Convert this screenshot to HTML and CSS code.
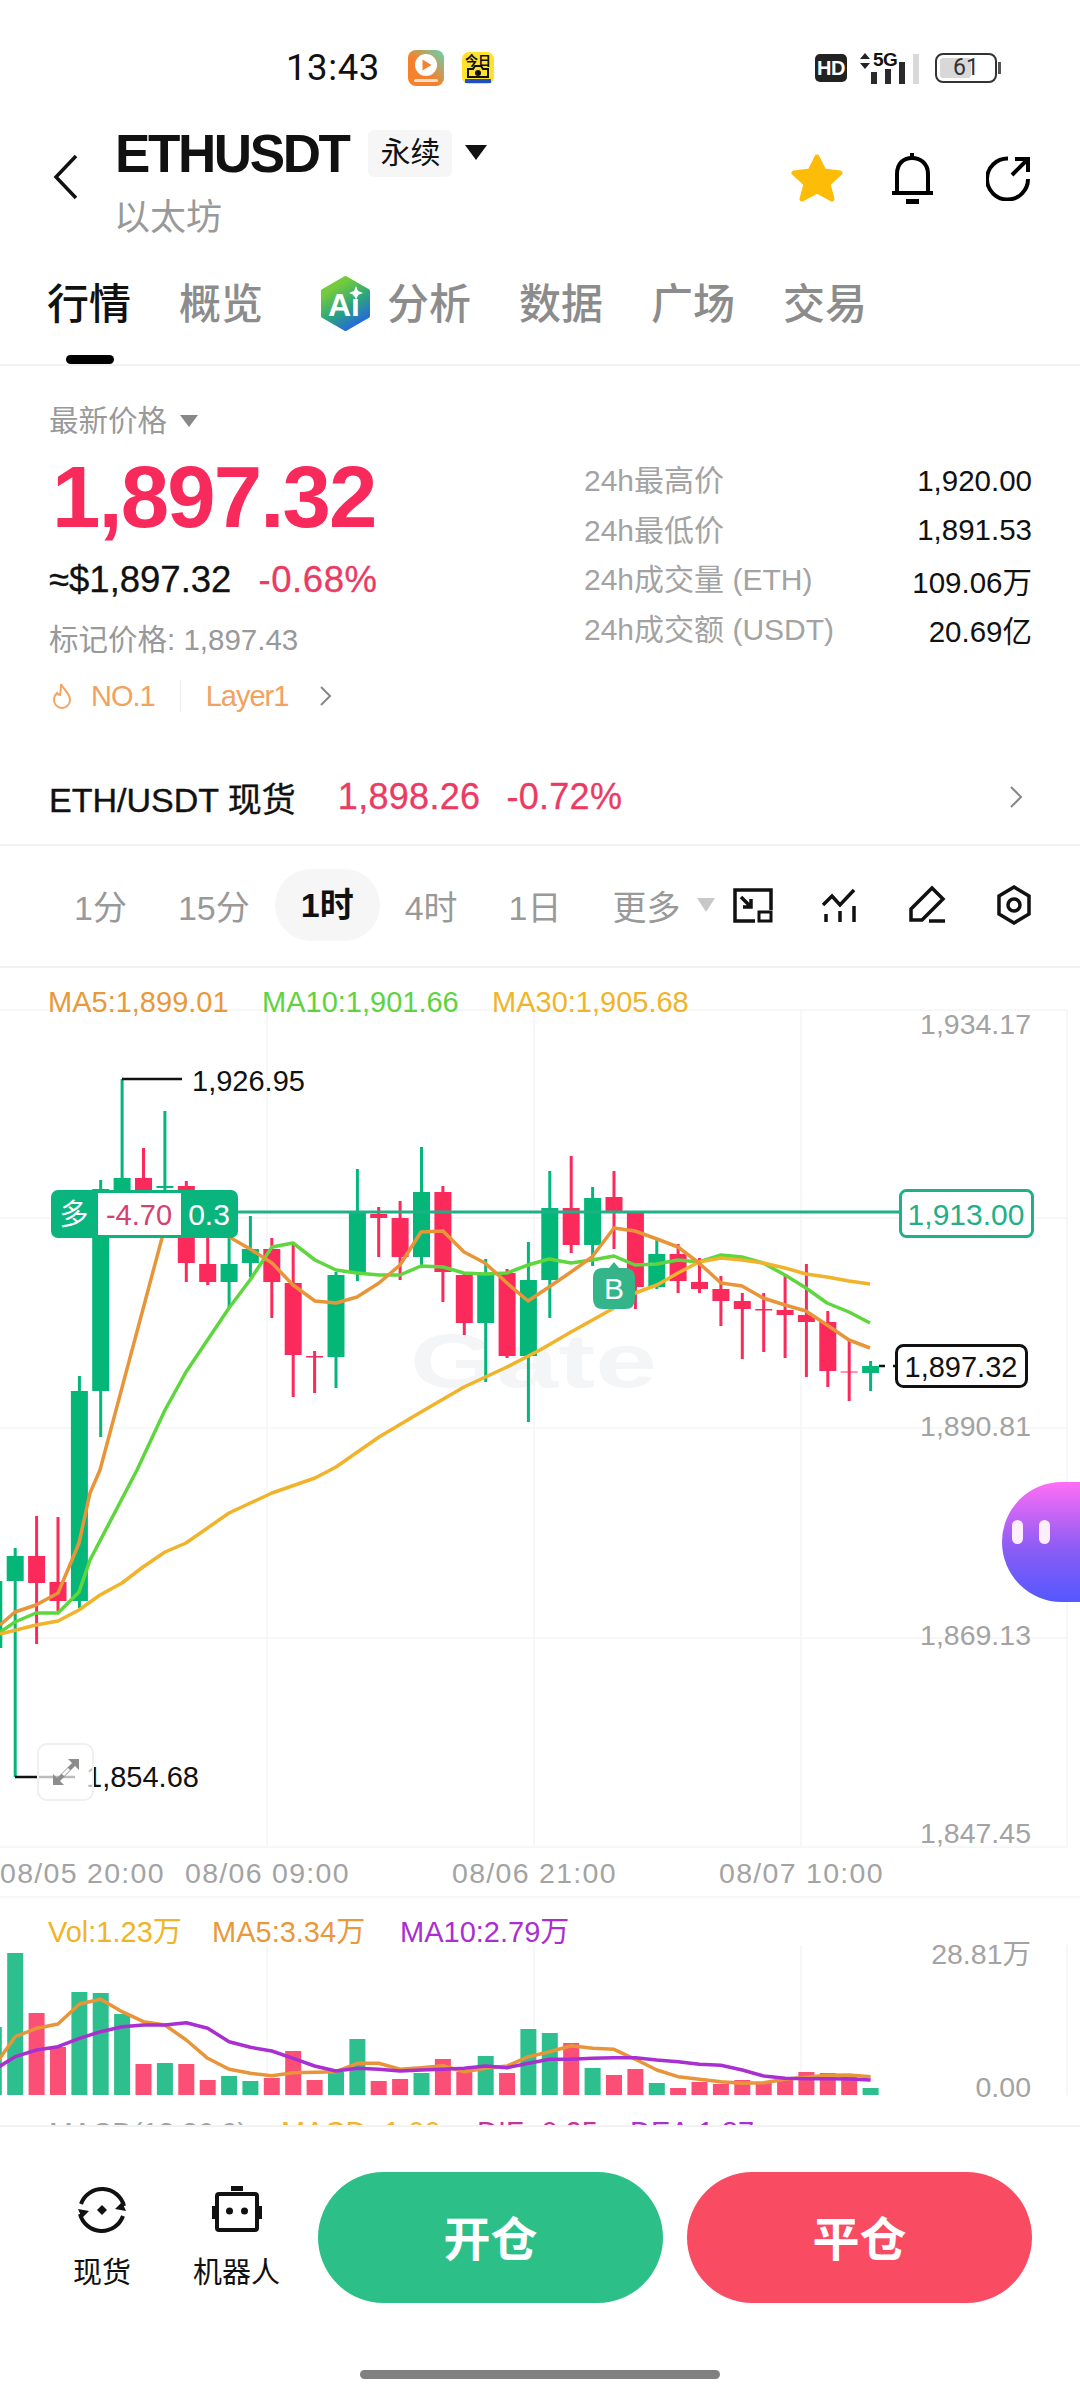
FILE: index.html
```html
<!DOCTYPE html>
<html lang="zh-CN">
<head>
  <meta charset="UTF-8">
  <meta name="viewport" content="width=device-width, initial-scale=1.0">
  <title>ETHUSDT 永续</title>
  <link rel="stylesheet" href="styles.css">
</head>
<body>
  <div class="phone">
    <div class="status">
      <span class="clock">13:43</span>
      <svg class="app-one" width="36" height="36" viewBox="0 0 36 36">
        <defs>
          <linearGradient id="appGrad" x1="0" y1="1" x2="1" y2="0">
            <stop offset="0.45" stop-color="#f5812e"/>
            <stop offset="1" stop-color="#5fd6b4"/>
          </linearGradient>
        </defs>
        <rect width="36" height="36" rx="8" fill="url(#appGrad)"/>
        <circle cx="18" cy="15" r="11" fill="#fff"/>
        <path d="M14.5 9.5 L23.5 15 L14.5 20.5Z" fill="#f5812e"/>
        <rect x="6" y="29" width="24" height="3" rx="1.5" fill="#fde0c8"/>
      </svg>
      <svg class="app-two" width="32" height="32" viewBox="0 0 32 32">
        <rect width="32" height="32" rx="7" fill="#ffe22e"/>
        <text class="app-two-text" x="16" y="13">今日</text>
        <path d="M6 25V17H11L13 14H19L21 17H26V25Z" fill="none" stroke="#111" stroke-width="2"/>
        <circle cx="16" cy="21" r="3" fill="#111"/>
        <rect x="3" y="27" width="26" height="4" fill="#1f4fc0"/>
      </svg>
      <div class="status-right">
        <span class="hd">HD</span>
        <div class="signal">
          <span class="net">5G</span>
          <svg class="net-arrows" width="12" height="16" viewBox="0 0 12 16"><path d="M6 0L11 6H1ZM6 16L11 10H1Z" fill="#222"/></svg>
          <div class="bars">
            <i class="bar b1"></i><i class="bar b2"></i><i class="bar b3"></i><i class="bar b4"></i>
          </div>
        </div>
        <div class="battery"><div class="battery-fill"></div><span class="battery-num">61</span></div>
        <i class="battery-nib"></i>
      </div>
    </div>

    <div class="header">
      <svg class="back" width="26" height="46" viewBox="0 0 26 46"><path d="M23 2L3 23L23 44" fill="none" stroke="#111" stroke-width="3.5"/></svg>
      <div class="title-block">
        <div class="title-row">
          <span class="title">ETHUSDT</span>
          <span class="tag">永续</span>
          <i class="caret"></i>
        </div>
        <div class="subtitle">以太坊</div>
      </div>
      <div class="header-icons">
        <svg width="52" height="48" viewBox="0 0 52 48"><path d="M26 3L33 17L49 19L37 30L41 45L26 37L11 45L15 30L3 19L19 17Z" fill="#fdbc07" stroke="#fdbc07" stroke-width="5" stroke-linejoin="round"/></svg>
        <svg width="44" height="52" viewBox="0 0 44 52"><path d="M6 41V22C6 12 12 6 21 6C30 6 37 12 37 22V41M1 41H42" fill="none" stroke="#000" stroke-width="4"/><path d="M21 1V6" stroke="#000" stroke-width="4"/><rect x="15" y="47" width="13" height="5" fill="#000"/></svg>
        <svg class="share" width="46" height="46" viewBox="0 0 46 46"><path d="M42 24A20.500 20.500 0 1 1 22 3.500" fill="none" stroke="#000" stroke-width="4"/><path d="M26 20L41 5M29 4H42V17" fill="none" stroke="#000" stroke-width="4"/></svg>
      </div>
    </div>

    <div class="tabs">
      <span class="tab tab-on">行情<i class="tab-line"></i></span>
      <span class="tab">概览</span>
      <svg class="ai-icon" width="51" height="55" viewBox="0 0 51 55">
        <defs>
          <linearGradient id="aiGrad" x1="0.2" y1="0.1" x2="0.7" y2="1">
            <stop offset="0.1" stop-color="#74cb3c"/>
            <stop offset="0.55" stop-color="#2ba57f"/>
            <stop offset="1" stop-color="#2563e6"/>
          </linearGradient>
        </defs>
        <path d="M25.500 2L48 15V40L25.500 53L3 40V15Z" fill="url(#aiGrad)" stroke="url(#aiGrad)" stroke-width="4" stroke-linejoin="round"/>
        <text class="ai-text" x="24" y="40">Ai</text>
        <path d="M36 10L38 15L43 17L38 19L36 24L34 19L29 17L34 15Z" fill="#fff"/>
      </svg>
      <span class="tab tab-ai">分析</span>
      <span class="tab">数据</span>
      <span class="tab">广场</span>
      <span class="tab">交易</span>
    </div>

    <div class="summary">
      <div class="price-col">
        <div class="price-label">最新价格<i class="caret caret-grey"></i></div>
        <div class="price">1,897.32</div>
        <div class="usd-row"><span>≈$1,897.32</span><span class="red">-0.68%</span></div>
        <div class="mark">标记价格: 1,897.43</div>
        <div class="rank-row">
          <svg width="20" height="26" viewBox="0 0 20 26"><path d="M9 1C11 6 18 10 18 17A8 8 0 0 1 2 17C2 14 3 12 5 10C6 12 7 12 8 12C9 8 9 5 9 1Z" fill="none" stroke="#f3a566" stroke-width="2"/></svg>
          <span class="rank">NO.1</span>
          <i class="rank-sep"></i>
          <span class="rank">Layer1</span>
          <svg width="13" height="22" viewBox="0 0 13 22"><path d="M2 2L11 11L2 20" fill="none" stroke="#888" stroke-width="2"/></svg>
        </div>
      </div>
      <div class="stats">
        <div class="stat"><span>24h最高价</span><b>1,920.00</b></div>
        <div class="stat"><span>24h最低价</span><b>1,891.53</b></div>
        <div class="stat"><span>24h成交量 (ETH)</span><b>109.06万</b></div>
        <div class="stat"><span>24h成交额 (USDT)</span><b>20.69亿</b></div>
      </div>
    </div>

    <div class="spot">
      <span class="spot-name">ETH/USDT 现货</span>
      <span class="spot-num">1,898.26</span>
      <span class="spot-num">-0.72%</span>
      <svg class="spot-go" width="14" height="24" viewBox="0 0 14 24"><path d="M2 2L12 12L2 22" fill="none" stroke="#888" stroke-width="2"/></svg>
    </div>

    <div class="periods">
      <span class="period">1分</span>
      <span class="period">15分</span>
      <span class="period period-on">1时</span>
      <span class="period">4时</span>
      <span class="period">1日</span>
      <span class="period">更多</span>
      <i class="caret caret-pale"></i>
      <div class="tools">
        <svg width="40" height="40" viewBox="0 0 40 40"><path d="M22 36H2V5H38V25" fill="none" stroke="#111" stroke-width="3.500"/><rect x="26" y="27" width="12" height="9" fill="none" stroke="#111" stroke-width="3"/><path d="M8 12L18 22M18 14V22H10" fill="none" stroke="#111" stroke-width="3.500"/></svg>
        <svg width="40" height="40" viewBox="0 0 40 40"><path d="M3 20L12 11L20 20L34 5M6 29V37M20 26V37M34 21V37" fill="none" stroke="#111" stroke-width="3.500"/></svg>
        <svg width="40" height="40" viewBox="0 0 40 40"><path d="M25 3L36 14L15 35H4V24ZM22 36H38" fill="none" stroke="#111" stroke-width="3.500"/></svg>
        <svg width="40" height="40" viewBox="0 0 40 40"><path d="M20 2L35 11V29L20 38L5 29V11Z" fill="none" stroke="#111" stroke-width="3.500"/><circle cx="20" cy="20" r="6" fill="none" stroke="#111" stroke-width="3.500"/></svg>
      </div>
    </div>

    <div class="chart">
      <svg id="plot" class="plot" width="1080" height="1157" viewBox="0 968 1080 1157"></svg>
      <div class="bot"><i class="eye"></i><i class="eye"></i></div>
      <div class="expand">
        <svg width="30" height="30" viewBox="0 0 30 30"><path d="M28 2V13L24 9L9 24L13 28H2V17L6 21L21 6L17 2Z" fill="#8c8c8c"/><path d="M12 18L18 12" stroke="#fff" stroke-width="3"/></svg>
      </div>
    </div>

    <div class="footer">
      <div class="foot-item">
        <svg width="50" height="50" viewBox="0 0 50 50"><path d="M3 29A22.500 22.500 0 0 0 46 31M47 21A22.500 22.500 0 0 0 4 19" fill="none" stroke="#111" stroke-width="4"/><path d="M1 24L12 26L5 33ZM49 26L38 24L45 17Z" fill="#111"/><path d="M25 20L30 25L25 30L20 25Z" fill="#111"/></svg>
        <span class="foot-label">现货</span>
      </div>
      <div class="foot-item">
        <svg width="50" height="50" viewBox="0 0 50 50"><rect x="19" y="1" width="12" height="5" fill="#111"/><rect x="5" y="9" width="40" height="36" rx="2" fill="none" stroke="#111" stroke-width="4"/><rect x="0" y="21" width="4" height="13" fill="#111"/><rect x="46" y="21" width="4" height="13" fill="#111"/><circle cx="17.500" cy="26" r="3.500" fill="#111"/><circle cx="32.500" cy="26" r="3.500" fill="#111"/></svg>
        <span class="foot-label">机器人</span>
      </div>
      <button class="trade trade-open">开仓</button>
      <button class="trade trade-close">平仓</button>
    </div>
    <div class="home-wrap"><i class="home-bar"></i></div>
  </div>

  <script>
    // [slot, high, bodyTop, bodyBottom, low, up]
    const candles = [
      [-1, 1581, 1581, 1648, 1648, 1], [0, 1548, 1556, 1581, 1777, 1], [1, 1516, 1556, 1583, 1644, 0],
      [2, 1517, 1582, 1601, 1611, 0], [3, 1376, 1391, 1601, 1608, 1], [4, 1180, 1189, 1391, 1437, 1],
      [5, 1079, 1178, 1195, 1195, 1], [6, 1148, 1178, 1190, 1195, 0], [7, 1111, 1186, 1188, 1200, 1],
      [8, 1181, 1186, 1263, 1282, 0], [9, 1237, 1264, 1282, 1285, 0], [10, 1237, 1264, 1282, 1308, 1],
      [11, 1216, 1249, 1263, 1277, 1], [12, 1238, 1249, 1282, 1318, 0], [13, 1245, 1283, 1355, 1397, 0],
      [14, 1351, 1356, 1357.5, 1393, 0], [15, 1272, 1275, 1357, 1388, 1], [16, 1169, 1213, 1272, 1281, 1],
      [17, 1207, 1214, 1218, 1257, 0], [18, 1201, 1218, 1257, 1280, 0], [19, 1147, 1192, 1257, 1267, 1],
      [20, 1186, 1192, 1272, 1302, 0], [21, 1272, 1275, 1323, 1335, 0], [22, 1259, 1275, 1323, 1382, 1],
      [23, 1269, 1273, 1356, 1358, 0], [24, 1242, 1280, 1356, 1422, 1], [25, 1171, 1208, 1280, 1318, 1],
      [26, 1156, 1208, 1245, 1253, 0], [27, 1187, 1198, 1245, 1266, 1], [28, 1171, 1197, 1211, 1249, 0],
      [29, 1213, 1213, 1287, 1309, 0], [30, 1240, 1254, 1287, 1289, 1], [31, 1244, 1254, 1281, 1293, 0],
      [32, 1258, 1282, 1289, 1293, 0], [33, 1276, 1289, 1301, 1326, 0], [34, 1293, 1301, 1309, 1359, 0],
      [35, 1293, 1309, 1310.5, 1352, 0], [36, 1274, 1310, 1315, 1358, 0], [37, 1264, 1315, 1322, 1377, 0],
      [38, 1311, 1322, 1371, 1387, 0], [39, 1340, 1371.5, 1372.5, 1401, 0], [40, 1361, 1366, 1373, 1391, 1]
    ];

    // [slot, top of bar, up]
    const volumes = [
      [-1, 2027, 1], [0, 1953, 1], [1, 2013, 0], [2, 2047, 0], [3, 1992, 1], [4, 1993, 1], [5, 2014, 1],
      [6, 2064, 0], [7, 2063, 1], [8, 2064, 0], [9, 2080, 0], [10, 2076, 1], [11, 2081, 1], [12, 2078, 0],
      [13, 2051, 0], [14, 2080, 0], [15, 2072, 1], [16, 2039, 1], [17, 2081, 0], [18, 2079, 0], [19, 2073, 1],
      [20, 2059, 0], [21, 2072, 0], [22, 2056, 1], [23, 2073, 0], [24, 2029, 1], [25, 2033, 1], [26, 2043, 0],
      [27, 2068, 1], [28, 2075, 0], [29, 2069, 0], [30, 2083, 1], [31, 2088, 0], [32, 2082, 0], [33, 2084, 0],
      [34, 2080, 0], [35, 2082, 0], [36, 2077, 0], [37, 2072, 0], [38, 2073, 0], [39, 2077, 0], [40, 2088, 1]
    ];

    const ma5 = "0,1625 15,1612 36,1605 58,1593 72,1560 79,1543 90,1493 100,1470 162,1238 186,1200 231,1238 250,1249 272,1263 293,1285 315,1301 336,1303 357,1297 379,1283 400,1265 421,1232 443,1231 464,1252 485,1263 507,1283 528,1301 549,1287 571,1272 592,1257 614,1228 635,1231 657,1239 678,1247 699,1263 721,1283 742,1286 763,1298 785,1305 806,1311 827,1325 849,1340 870,1348";
    const ma10 = "0,1632 15,1622 36,1613 58,1613 79,1592 90,1560 137,1470 165,1410 186,1372 229,1308 250,1280 272,1247 293,1243 315,1260 336,1270 357,1273 379,1275 400,1275 421,1266 443,1267 464,1273 485,1274 507,1273 528,1265 549,1259 571,1263 592,1260 614,1256 635,1265 657,1264 678,1260 699,1262 721,1255 742,1257 763,1263 785,1275 806,1288 827,1303 849,1312 870,1323";
    const ma30 = "0,1634 36,1625 58,1621 79,1610 100,1595 122,1583 143,1567 165,1552 186,1543 229,1513 272,1493 315,1478 336,1467 379,1437 421,1412 464,1387 507,1367 540,1350 571,1332 614,1308 635,1293 657,1285 678,1273 699,1262 721,1258 742,1260 763,1263 785,1268 806,1274 827,1277 849,1281 870,1284";
    const volMa5 = [500, 410, 385, 372, 312, 298, 335, 365, 375, 420, 475, 508, 520, 527, 518, 517, 515, 490, 490, 508, 503, 497, 515, 505, 498, 470, 455, 437, 445, 448, 478, 510, 530, 538, 545, 550, 548, 538, 532, 526, 525, 530];
    const volMa10 = [510, 470, 450, 440, 415, 395, 380, 375, 375, 368, 385, 425, 442, 453, 475, 498, 513, 505, 508, 513, 510, 508, 505, 498, 503, 490, 478, 478, 475, 473, 473, 480, 485, 493, 496, 510, 528, 535, 536, 536, 537, 540];

    const slotX = i => 15.2 + 21.385 * i;
    const volPoints = list => list.map((v, i) => `${slotX(i - 1).toFixed(1)},${(1900 + v / 3).toFixed(1)}`).join(" ");
    const label = (x, y, cls, str, anchor) => `<text class="${cls}" x="${x}" y="${y}"${anchor ? ` text-anchor="${anchor}"` : ""}>${str}</text>`;

    let out = "";

    // grid
    [1010, 1218, 1428, 1638, 1847, 1897].forEach(y => {
      out += `<line class="grid" x1="0" x2="${y === 1897 ? 1080 : 1067}" y1="${y}" y2="${y}"/>`;
    });
    [267, 534, 801, 1067].forEach(x => {
      out += `<line class="grid" x1="${x}" x2="${x}" y1="1010" y2="1847"/>`;
      out += `<line class="grid" x1="${x}" x2="${x}" y1="1945" y2="2095"/>`;
    });
    out += `<text class="mark-logo" x="410" y="1387" textLength="247" lengthAdjust="spacingAndGlyphs">Gate</text>`;

    // candles
    candles.forEach(([slot, high, top, bottom, low, up]) => {
      const x = slotX(slot);
      const cls = up ? "up" : "down";
      out += `<rect class="${cls}" x="${(x - 1.5).toFixed(1)}" width="3" y="${high}" height="${low - high}"/>`;
      out += `<rect class="${cls}" x="${(x - 8.5).toFixed(1)}" width="17" y="${top}" height="${bottom - top}"/>`;
    });

    // position line
    out += `<rect class="order" x="235" width="666" y="1210.5" height="3"/>`;

    out += `<polyline class="line line-ma10" points="${ma10}"/>`;
    out += `<polyline class="line line-ma30" points="${ma30}"/>`;
    out += `<polyline class="line line-ma5" points="${ma5}"/>`;

    // legends and axes
    out += label(48, 1012, "txt txt-ma5", "MA5:1,899.01");
    out += label(262, 1012, "txt txt-ma10", "MA10:1,901.66");
    out += label(492, 1012, "txt txt-ma30", "MA30:1,905.68");
    [[1034, "1,934.17"], [1436, "1,890.81"], [1645, "1,869.13"], [1843, "1,847.45"]].forEach(([y, v]) => {
      out += label(1031, y, "txt axis", v, "end");
    });
    [[0, "08/05 20:00"], [185, "08/06 09:00"], [452, "08/06 21:00"], [719, "08/07 10:00"]].forEach(([x, v]) => {
      out += label(x, 1883, "txt axis axis-time", v);
    });

    // high and low marks
    out += `<path class="ink" d="M122 1079H182M15 1777H75"/>`;
    out += label(192, 1091, "txt", "1,926.95");
    out += label(86, 1787, "txt", "1,854.68");

    // position tag
    out += `<rect class="tag-bg" x="51" y="1190" width="187" height="48" rx="7"/>`;
    out += `<rect class="tag-mid" x="98" y="1193" width="83" height="42"/>`;
    out += label(74, 1225, "txt tag-white", "多", "middle");
    out += label(139, 1225, "txt tag-loss", "-4.70", "middle");
    out += label(209, 1225, "txt tag-white tag-big", "0.3", "middle");
    out += `<rect class="tag-box" x="900.5" y="1190.5" width="132" height="46" rx="6"/>`;
    out += label(966, 1225, "txt tag-green tag-big", "1,913.00", "middle");

    // buy marker
    out += `<path class="buy" d="M603 1268H609L614 1262L619 1268H625Q635 1268 635 1278V1299Q635 1309 625 1309H603Q593 1309 593 1299V1278Q593 1268 603 1268Z"/>`;
    out += label(614, 1299, "txt buy-text", "B", "middle");

    // last price
    out += `<path class="ink ink-dash" d="M879 1366H895"/>`;
    out += `<rect class="last-box" x="896.5" y="1345.5" width="130" height="41" rx="7"/>`;
    out += label(961, 1377, "txt", "1,897.32", "middle");

    // volume pane
    volumes.forEach(([slot, top, up]) => {
      out += `<rect class="${up ? "vol-up" : "vol-down"}" x="${(slotX(slot) - 8).toFixed(1)}" width="16" y="${top}" height="${2095 - top}"/>`;
    });
    out += `<polyline class="line line-ma5" points="${volPoints(volMa5)}"/>`;
    out += `<polyline class="line line-vol10" points="${volPoints(volMa10)}"/>`;
    out += label(48, 1942, "txt txt-ma30", "Vol:1.23万");
    out += label(212, 1942, "txt txt-ma5", "MA5:3.34万");
    out += label(400, 1942, "txt txt-vol10", "MA10:2.79万");
    out += label(1031, 1964, "txt axis", "28.81万", "end");
    out += label(1031, 2097, "txt axis", "0.00", "end");

    // next pane, cut by the footer
    out += label(49, 2142, "txt axis", "MACD(12,26,9)");
    out += label(281, 2142, "txt txt-ma30", "MACD:-1.00");
    out += label(477, 2142, "txt txt-dif", "DIF:-0.25");
    out += label(630, 2142, "txt txt-vol10", "DEA:1.87");

    document.getElementById("plot").innerHTML = out;
  </script>
</body>
</html>
```

FILE: styles.css
```css
* {
  box-sizing: border-box;
}
body {
  margin: 0;
  background: #fff;
  font-family: "Liberation Sans", "Noto Sans CJK SC", sans-serif;
  color: #111;
}
i {
  display: block;
}
.phone {
  width: 1080px;
  height: 2400px;
  overflow: hidden;
  position: relative;
}

/* status bar */
.status {
  height: 120px;
  padding: 48px 48px 0 286px;
  display: flex;
  align-items: flex-start;
}
.clock {
  font-family: "Roboto", "Liberation Sans", sans-serif;
  font-size: 36.5px;
  line-height: 40px;
  letter-spacing: 0.6px;
  width: 122px;
}
.app-one {
  margin-top: 2px;
}
.app-two {
  margin: 4px 0 0 18px;
}
.app-two-text {
  font-size: 13px;
  font-weight: bold;
  text-anchor: middle;
  fill: #111;
}
.status-right {
  margin-left: auto;
  display: flex;
  align-items: center;
  height: 36px;
  margin-right: 31px;
  margin-top: 2px;
}
.hd {
  width: 32px;
  height: 28px;
  background: #222;
  color: #fff;
  border-radius: 5px;
  font-size: 20px;
  font-weight: bold;
  line-height: 28px;
  text-align: center;
  letter-spacing: -0.5px;
}
.signal {
  width: 60px;
  height: 32px;
  margin-left: 12px;
  position: relative;
}
.net {
  position: absolute;
  left: 14px;
  top: -2px;
  font-size: 19px;
  line-height: 20px;
  font-weight: bold;
  letter-spacing: -0.5px;
}
.net-arrows {
  position: absolute;
  left: 0;
  top: 1px;
}
.bars {
  position: absolute;
  inset: 0;
  display: flex;
  align-items: flex-end;
  justify-content: flex-end;
  gap: 8px;
}
.bar {
  width: 6px;
  background: #2a2a2a;
}
.b1 {
  height: 12px;
}
.b2 {
  height: 15px;
}
.b3 {
  height: 22px;
}
.b4 {
  height: 30px;
  background: #d9d9d9;
}
.battery {
  width: 62px;
  height: 30px;
  border: 2.5px solid #333;
  border-radius: 8px;
  margin-left: 16px;
  position: relative;
  padding: 3px;
}
.battery-fill {
  width: 60%;
  height: 100%;
  background: #d8d8d8;
  border-radius: 3px;
}
.battery-num {
  position: absolute;
  inset: 0;
  text-align: center;
  font-family: "Roboto", sans-serif;
  font-size: 23px;
  line-height: 25px;
  color: #333;
}
.battery-nib {
  width: 3px;
  height: 12px;
  background: #555;
  margin-left: 1px;
}

/* title */
.header {
  height: 150px;
  display: flex;
  align-items: flex-start;
  padding: 10px 48px 0 53px;
}
.back {
  margin-top: 24px;
}
.title-block {
  margin-left: 36px;
}
.title-row {
  display: flex;
  align-items: center;
  height: 47px;
}
.title {
  font-size: 53px;
  font-weight: bold;
  letter-spacing: -2.4px;
  line-height: 47px;
}
.tag {
  margin-left: 20px;
  width: 84px;
  height: 47px;
  background: #f6f6f6;
  border-radius: 6px;
  font-size: 30px;
  line-height: 46px;
  text-align: center;
}
.caret {
  width: 0;
  height: 0;
  border-left: 11px solid transparent;
  border-right: 11px solid transparent;
  border-top: 15px solid #111;
  margin-left: 13px;
  margin-top: -2px;
}
.subtitle {
  margin-top: 22px;
  margin-left: -1px;
  font-size: 36px;
  line-height: 38px;
  color: #999;
}
.header-icons {
  margin-left: auto;
  margin-top: 22px;
  display: flex;
  align-items: center;
  gap: 48px;
}
.share {
  margin-left: 3px;
}

/* tabs */
.tabs {
  height: 96px;
  display: flex;
  align-items: flex-start;
  padding: 11px 0 0 47px;
  gap: 48px;
  border-bottom: 2px solid #f2f2f2;
}
.tab {
  font-size: 42px;
  line-height: 48px;
  font-weight: 500;
  color: #8c8c8c;
  position: relative;
}
.tab-on {
  color: #111;
}
.tab-line {
  position: absolute;
  left: 19px;
  top: 74px;
  width: 48px;
  height: 9px;
  border-radius: 5px;
  background: #000;
}
.ai-icon {
  margin: -5px 0 0 9px;
}
.tab-ai {
  margin-left: -32px;
}
.ai-text {
  font-size: 32px;
  font-weight: bold;
  fill: #fff;
  text-anchor: middle;
}

/* price block */
.summary {
  height: 394px;
  display: flex;
  padding: 0 48px 0 49px;
}
.price-col {
  width: 535px;
  padding-top: 38px;
}
.price-label {
  display: flex;
  align-items: center;
  font-size: 29.5px;
  line-height: 34px;
  color: #999;
}
.caret-grey {
  border-left-width: 9px;
  border-right-width: 9px;
  border-top: 12px solid #888;
  margin-top: 0;
}
.price {
  margin-top: 14px;
  font-size: 87px;
  line-height: 90px;
  font-weight: bold;
  letter-spacing: -1.9px;
  color: #f8295b;
  padding-left: 3px;
}
.usd-row {
  margin-top: 18px;
  display: flex;
  gap: 27px;
  font-size: 36.5px;
  line-height: 40px;
  -webkit-text-stroke: 0.3px currentColor;
}
.red {
  color: #ec3b63;
  letter-spacing: 0.6px;
}
.mark {
  margin-top: 20px;
  font-size: 29.5px;
  line-height: 40px;
  color: #999;
}
.rank-row {
  margin-top: 16px;
  height: 40px;
  display: flex;
  align-items: center;
  padding-left: 3px;
}
.rank {
  font-size: 29px;
  letter-spacing: -1px;
  color: #f2a25e;
  margin-left: 19px;
}
.rank-sep {
  width: 1px;
  height: 32px;
  background: #eee;
  margin-left: 25px;
  margin-right: 6px;
}
.rank-row svg:last-child {
  margin-left: 31px;
}
.stats {
  flex: 1;
  padding-top: 90px;
}
.stat {
  height: 49.5px;
  display: flex;
  align-items: center;
  justify-content: space-between;
  font-size: 30px;
  color: #a3a3a3;
}
.stat span {
  padding-bottom: 5px;
}
.stat b {
  font-weight: normal;
  font-size: 29.5px;
  color: #111;
}

/* spot row */
.spot {
  height: 86px;
  padding: 0 57px 10px 49px;
  display: flex;
  align-items: center;
  border-bottom: 2px solid #f2f2f2;
}
.spot-name {
  font-size: 34px;
  -webkit-text-stroke: 0.4px #111;
}
.spot-num {
  font-size: 36px;
  color: #ec3b63;
  margin-left: 42px;
  letter-spacing: 0.3px;
  -webkit-text-stroke: 0.3px #ec3b63;
}
.spot-num + .spot-num {
  margin-left: 26px;
}
.spot-go {
  margin-left: auto;
}

/* period switch */
.periods {
  height: 122px;
  padding: 0 0 2px 74px;
  display: flex;
  align-items: center;
  gap: 51px;
  border-bottom: 2px solid #f2f2f2;
  font-size: 34px;
  color: #999;
}
.period-on {
  color: #111;
  font-weight: bold;
  background: #f6f6f6;
  height: 72px;
  line-height: 72px;
  margin: 0 -26px;
  padding: 0 26px;
  border-radius: 36px;
}
.caret-pale {
  border-left-width: 9px;
  border-right-width: 9px;
  border-top: 14px solid #c8c8c8;
  margin: 0 0 0 -35px;
}
.tools {
  position: absolute;
  left: 733px;
  display: flex;
  gap: 47px;
}

/* chart */
.chart {
  height: 1157px;
  position: relative;
  overflow: hidden;
}
.plot {
  display: block;
}
.grid {
  stroke: #f4f4f4;
  stroke-width: 1.5;
}
.mark-logo {
  font-size: 76px;
  font-weight: bold;
  fill: #f3f5f6;
}
.up {
  fill: #05b679;
}
.down {
  fill: #fb2a5b;
}
.vol-up {
  fill: #2ebf8f;
}
.vol-down {
  fill: #fb4f75;
}
.order {
  fill: #1fb088;
}
.line {
  fill: none;
  stroke-width: 3.5;
  stroke-linejoin: round;
}
.line-ma5 {
  stroke: #e8953a;
}
.line-ma10 {
  stroke: #5ed63e;
}
.line-ma30 {
  stroke: #f0b32a;
}
.line-vol10 {
  stroke: #a92fd0;
}
.txt {
  font-size: 29px;
  fill: #111;
}
.axis {
  fill: #a3a3a3;
  font-size: 28.5px;
}
.axis-time {
  letter-spacing: 1.3px;
}
.txt-ma5 {
  fill: #e8993a;
}
.txt-ma10 {
  fill: #5ed33e;
}
.txt-ma30 {
  fill: #f0b429;
}
.txt-vol10 {
  fill: #a92fd0;
}
.txt-dif {
  fill: #c2359a;
}
.ink {
  fill: none;
  stroke: #111;
  stroke-width: 2.5;
}
.ink-dash {
  stroke-dasharray: 6 8;
}
.tag-bg {
  fill: #0ab47d;
}
.tag-mid {
  fill: #fff;
}
.tag-white {
  fill: #fff;
}
.tag-big {
  font-size: 30px;
}
.tag-loss {
  fill: #d6406f;
}
.tag-green {
  fill: #1fb088;
}
.tag-box {
  fill: #fff;
  stroke: #1fb088;
  stroke-width: 3;
}
.last-box {
  fill: #fff;
  stroke: #111;
  stroke-width: 3;
}
.buy {
  fill: #33b589;
}
.buy-text {
  fill: #fff;
  font-size: 30px;
}
.bot {
  position: absolute;
  right: 0;
  top: 514px;
  width: 78px;
  height: 120px;
  border-radius: 60px 0 0 60px;
  background: linear-gradient(#ff6ef6, #8c5cf4 55%, #5358ff);
  display: flex;
  gap: 16px;
  padding: 38px 0 0 10px;
}
.eye {
  width: 11px;
  height: 24px;
  border-radius: 6px;
  background: #fdeefc;
}
.expand {
  position: absolute;
  left: 37px;
  top: 775px;
  width: 57px;
  height: 58px;
  border: 2px solid #f0f0f0;
  border-radius: 10px;
  background: rgba(255, 255, 255, 0.72);
  display: flex;
  align-items: center;
  justify-content: center;
}

/* bottom actions */
.footer {
  height: 245px;
  padding: 45px 48px 0 73px;
  display: flex;
  align-items: flex-start;
  background: #fff;
  border-top: 2px solid #f2f2f2;
}
.foot-item {
  display: flex;
  flex-direction: column;
  align-items: center;
  padding-top: 13px;
  margin-right: 62px;
}
.foot-item + .foot-item {
  margin-right: 38px;
}
.foot-label {
  margin-top: 22px;
  font-size: 29px;
  line-height: 32px;
}
.trade {
  width: 345px;
  height: 131px;
  border: 0;
  border-radius: 66px;
  color: #fff;
  font-family: inherit;
  font-size: 47px;
  font-weight: bold;
  padding: 0 0 4px;
}
.trade-open {
  background: #2cc088;
}
.trade-close {
  background: #f94c62;
  margin-left: 24px;
}
.home-wrap {
  display: flex;
  justify-content: center;
}
.home-bar {
  width: 360px;
  height: 9px;
  border-radius: 5px;
  background: #808080;
}
```
